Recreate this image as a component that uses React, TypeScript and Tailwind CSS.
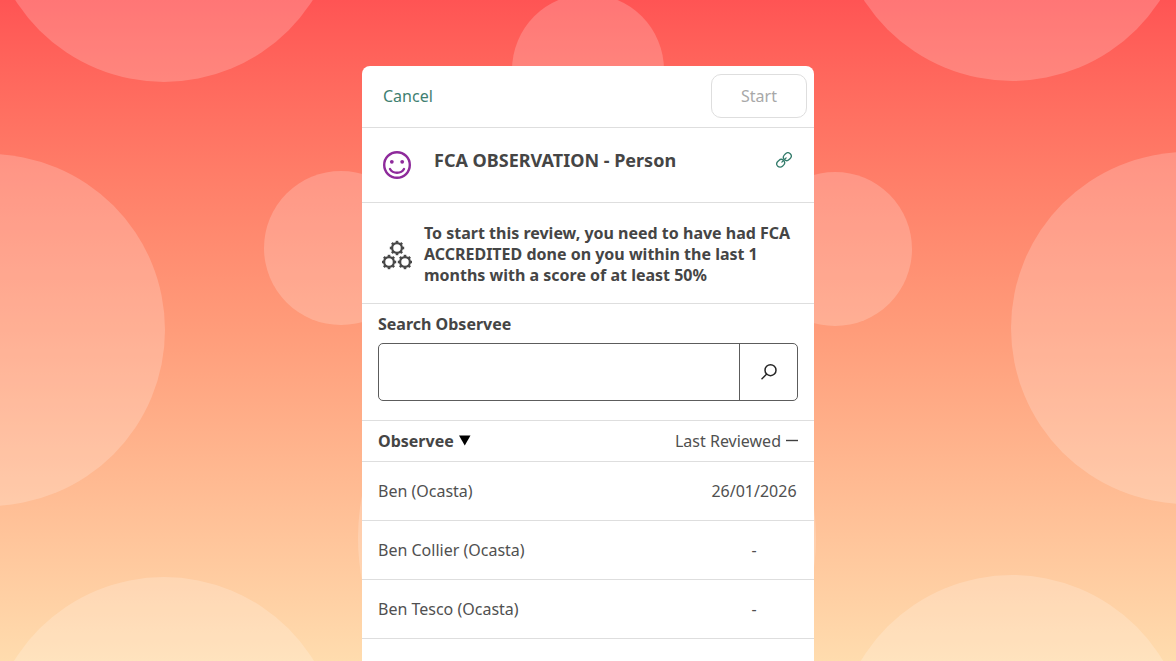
import React, { useState } from "react";

interface Observee {
  name: string;
  lastReviewed: string;
}

const observees: Observee[] = [
  { name: "Ben (Ocasta)", lastReviewed: "26/01/2026" },
  { name: "Ben Collier (Ocasta)", lastReviewed: "-" },
  { name: "Ben Tesco (Ocasta)", lastReviewed: "-" },
];

const Backdrop: React.FC = () => (
  <svg
    className="absolute inset-0 h-full w-full"
    viewBox="0 0 1176 661"
    preserveAspectRatio="xMidYMid slice"
    fill="#ffffff"
    fillOpacity="0.2"
    aria-hidden="true"
  >
    <circle cx="164" cy="-94" r="176" />
    <circle cx="588" cy="70" r="76" />
    <circle cx="1012" cy="-95" r="176" />
    <circle cx="-11" cy="330" r="176" />
    <circle cx="341" cy="248" r="77" />
    <circle cx="835" cy="249" r="77" />
    <circle cx="1187" cy="328" r="176" />
    <circle cx="587" cy="538" r="229" />
    <circle cx="164" cy="753" r="176" />
    <circle cx="1012" cy="751" r="176" />
  </svg>
);

const SmileyIcon: React.FC = () => (
  <svg
    width="30"
    height="30"
    viewBox="0 0 30 30"
    fill="none"
    stroke="#8e2a9b"
    strokeWidth="2.4"
    strokeLinecap="round"
    aria-hidden="true"
  >
    <circle cx="15" cy="15" r="12.8" />
    <circle cx="9.8" cy="11.8" r="1.9" fill="#8e2a9b" stroke="none" />
    <circle cx="20.2" cy="11.8" r="1.9" fill="#8e2a9b" stroke="none" />
    <path d="M8 19c1.4 2.4 3.8 3.8 7 3.8s5.6-1.4 7-3.8" />
  </svg>
);

const LinkIcon: React.FC = () => (
  <svg
    width="16"
    height="16"
    viewBox="0 0 16 16"
    fill="none"
    stroke="#347c6c"
    strokeWidth="1.3"
    strokeLinecap="round"
    aria-hidden="true"
  >
    <g transform="rotate(-45 8 8)">
      <rect x="-0.8" y="4.7" width="8.2" height="6.6" rx="3.3" />
      <rect x="8.6" y="4.7" width="8.2" height="6.6" rx="3.3" />
      <path d="M5 8h6" />
    </g>
  </svg>
);

const gears = [
  { cx: 15, cy: 8 },
  { cx: 7, cy: 22 },
  { cx: 23, cy: 22 },
];
const teeth = [0, 45, 90, 135, 180, 225, 270, 315];

const GearsIcon: React.FC = () => (
  <svg
    width="30"
    height="30"
    viewBox="0 0 30 30"
    fill="none"
    stroke="#484848"
    aria-hidden="true"
  >
    {gears.map(({ cx, cy }) => (
      <g key={`${cx}-${cy}`}>
        <circle cx={cx} cy={cy} r="4.9" strokeWidth="2.3" />
        {teeth.map((angle) => (
          <path
            key={angle}
            d={`M${cx} ${cy - 5.2}v-2`}
            strokeWidth="2.6"
            transform={`rotate(${angle} ${cx} ${cy})`}
          />
        ))}
      </g>
    ))}
  </svg>
);

const SearchIcon: React.FC = () => (
  <svg
    width="18"
    height="18"
    viewBox="0 0 18 18"
    fill="none"
    stroke="#262626"
    strokeWidth="1.5"
    strokeLinecap="round"
    aria-hidden="true"
  >
    <circle cx="10.5" cy="7.2" r="5.5" />
    <path d="M6.5 11.2 2 15.7" />
  </svg>
);

const App: React.FC = () => {
  const [query, setQuery] = useState("");

  const visible = observees.filter((o) =>
    o.name.toLowerCase().includes(query.toLowerCase()),
  );

  return (
    <div className="relative flex h-screen flex-col items-center overflow-hidden bg-linear-to-b from-[#ff5454] via-[#ff9c7a] to-[#ffdcae] px-4 pt-[66px] font-['Noto_Sans',sans-serif] text-base text-[#505050]">
      <Backdrop />

      <main className="relative w-full max-w-[452px] flex-1 rounded-t-lg bg-white">
        <header className="flex h-[62px] items-center justify-between border-b border-[#dedede] pr-[7px] pb-[2px] pl-[21px]">
          <button type="button" className="text-[#3f8071]">
            Cancel
          </button>
          <button
            type="button"
            disabled
            className="h-11 w-24 rounded-[10px] border border-[#dedede] text-[#a8a8a8]"
          >
            Start
          </button>
        </header>

        <section className="flex h-[75px] items-start border-b border-[#dedede] px-5 pt-5">
          <div className="mt-[2px]">
            <SmileyIcon />
          </div>
          <h1 className="ml-[22px] flex-1 text-lg leading-6 font-bold text-[#454545]">
            FCA OBSERVATION - Person
          </h1>
          <a href="#link" aria-label="Copy link" className="mt-1 mr-[2px]">
            <LinkIcon />
          </a>
        </section>

        <section className="flex items-center gap-3 border-b border-[#dedede] pt-5 pr-4 pb-[17px] pl-5">
          <GearsIcon />
          <p className="flex-1 leading-[21px] font-bold text-[#454545]">
            To start this review, you need to have had FCA ACCREDITED done on
            you within the last 1 months with a score of at least 50%
          </p>
        </section>

        <form
          className="border-b border-[#dedede] px-4 pt-2 pb-[19px]"
          onSubmit={(e) => e.preventDefault()}
        >
          <label htmlFor="observee" className="block font-bold text-[#454545]">
            Search Observee
          </label>
          <div className="mt-[7px] flex h-[58px] rounded-[5px] border border-[#5c5c5c]">
            <input
              id="observee"
              type="text"
              value={query}
              onChange={(e) => setQuery(e.target.value)}
              className="min-w-0 flex-1 px-3 outline-none"
            />
            <button
              type="submit"
              aria-label="Search"
              className="flex w-[58px] items-center justify-center border-l border-[#5c5c5c]"
            >
              <SearchIcon />
            </button>
          </div>
        </form>

        <table className="w-full border-collapse">
          <thead>
            <tr className="h-10 border-b border-[#dedede]">
              <th className="pl-4 text-left font-bold text-[#454545]">
                <button type="button" className="flex items-center gap-1">
                  Observee
                  <svg width="13" height="11" viewBox="0 0 13 11" aria-hidden="true">
                    <path d="M1 .5h11.500L6.750 10.500z" fill="#000000" />
                  </svg>
                </button>
              </th>
              <th className="pr-4 font-normal">
                <button type="button" className="ml-auto flex items-center gap-1">
                  Last Reviewed
                  <svg width="13" height="11" viewBox="0 0 13 11" aria-hidden="true">
                    <path d="M1 5.5h12" stroke="#404040" strokeWidth="1.4" />
                  </svg>
                </button>
              </th>
            </tr>
          </thead>
          <tbody>
            {visible.map((observee) => (
              <tr key={observee.name} className="h-[59px] border-b border-[#dedede]">
                <td className="pl-4">{observee.name}</td>
                <td className="pr-4 text-right">
                  <span className="inline-block min-w-[88px] text-center">
                    {observee.lastReviewed}
                  </span>
                </td>
              </tr>
            ))}
          </tbody>
        </table>
      </main>
    </div>
  );
};

export default App;
